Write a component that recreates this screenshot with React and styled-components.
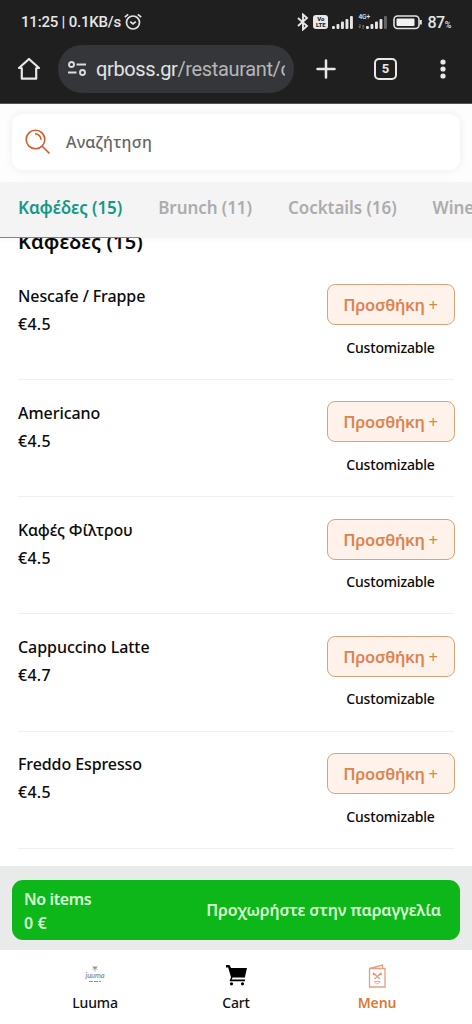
import React from "react";
import styled, { createGlobalStyle } from "styled-components";

const products = [
  { name: "Nescafe / Frappe", price: "€4.5", spacing: "-0.1px" },
  { name: "Americano", price: "€4.5", spacing: "-0.05px" },
  { name: "Καφές Φίλτρου", price: "€4.5", spacing: "-0.15px" },
  { name: "Cappuccino Latte", price: "€4.7", spacing: "-0.05px" },
  { name: "Freddo Espresso", price: "€4.5", spacing: "-0.1px" },
];

const categories = ["Καφέδες (15)", "Brunch (11)", "Cocktails (16)", "Wines (12)"];

function Signal({ weak }) {
  return (
    <svg width="22" height="14" viewBox="0 0 22 14" fill="#e6e6e6">
      <rect x="0" y="11" width="2.9" height="3" rx="1" />
      <rect x="4.5" y="9" width="2.9" height="5" rx="1" />
      <rect x="9" y="6.5" width="2.9" height="7.5" rx="1" />
      <rect x="13.5" y="4" width="2.9" height="10" rx="1" />
      <rect x="18" y="1" width="2.9" height="13" rx="1" fill={weak ? "#666" : "#e6e6e6"} />
    </svg>
  );
}

function StatusBar() {
  return (
    <Status>
      <Clock>11:25 | 0.1KB/s</Clock>
      <svg width="18" height="18" viewBox="0 0 18 18" fill="none" stroke="#e4e4e4" strokeWidth="1.7">
        <circle cx="9" cy="9.5" r="6.5" />
        <path d="M.8 4.200 4.200 1.400M17.200 4.200 13.800 1.400M6.200 8.600 9 11l2.800-2.400" />
      </svg>
      <StatusRight>
        <svg width="12" height="18" viewBox="0 0 12 18" fill="none" stroke="#e6e6e6" strokeWidth="1.9">
          <path d="m1 5 9 8-4 3.500v-15L10 5l-9 8" />
        </svg>
        <Volte><span>Vo</span><span>LTE</span></Volte>
        <Signal />
        <Mobile>
          <small>4G+</small>
          <svg width="7" height="5" viewBox="0 0 7 5" fill="none" stroke="#777" strokeWidth="1">
            <path d="M2 0v4L.5 2.500M5 5V1l1.500 1.500" />
          </svg>
          <Signal weak />
        </Mobile>
        <svg width="31" height="15" viewBox="0 0 31 15">
          <rect x="2" y="1" width="25" height="12.5" rx="3.5" fill="none" stroke="#e4e4e4" strokeWidth="1.6" />
          <rect x="4.5" y="3.5" width="18" height="7.5" rx="1" fill="#f1f1f1" />
          <path d="M28.800 5v4.500" stroke="#e4e4e4" strokeWidth="2" />
        </svg>
        <Percent>87<small>%</small></Percent>
      </StatusRight>
    </Status>
  );
}

function BrowserBar() {
  return (
    <Browser>
      <svg width="24" height="24" viewBox="0 0 24 24" fill="none" stroke="#e7e7e7" strokeWidth="2.2" strokeLinejoin="round">
        <path d="M4.800 11H2L12 2l10 9h-2.800M4.800 10.500V21.700h14.400V10.500" />
      </svg>
      <Address>
        <svg width="20" height="16" viewBox="0 0 20 16" fill="none" stroke="#dadce0" strokeWidth="1.9">
          <circle cx="4.5" cy="3.5" r="2.5" />
          <path d="M9.500 3.500H19M1 11.500h8.500" />
          <circle cx="15.5" cy="11.500" r="2.5" />
        </svg>
        <Url>qrboss.gr<span>/restaurant/cafe</span></Url>
      </Address>
      <svg width="20" height="20" viewBox="0 0 20 20" stroke="#e8e8e8" strokeWidth="2.5" strokeLinecap="round">
        <path d="M10 1.500v17M1.500 10h17" />
      </svg>
      <TabCount>5</TabCount>
      <svg width="6" height="20" viewBox="0 0 6 20" fill="#e8e8e8">
        <circle cx="3" cy="3" r="2.6" />
        <circle cx="3" cy="10" r="2.6" />
        <circle cx="3" cy="17" r="2.6" />
      </svg>
    </Browser>
  );
}

function App() {
  return (
    <>
      <GlobalStyle />
      <Screen>
        <StatusBar />
        <BrowserBar />
        <SearchArea>
          <SearchBox>
            <svg width="26" height="26" viewBox="0 0 26 26" fill="none" stroke="#d65a2c" strokeWidth="1.6">
              <circle cx="10.500" cy="10.500" r="9.300" />
              <path d="m17 17 7.500 7.500M10 4.800a6 6 0 0 1 6 6" />
            </svg>
            <span>Αναζήτηση</span>
          </SearchBox>
        </SearchArea>
        <Categories>
          {categories.map((name, i) => (
            <Category key={name} $active={i === 0}>{name}</Category>
          ))}
        </Categories>
        <List>
          <Heading>Καφέδες (15)</Heading>
          {products.map((item) => (
            <Product key={item.name}>
              <Info>
                <Name $spacing={item.spacing}>{item.name}</Name>
                <Price>{item.price}</Price>
              </Info>
              <Action>
                <AddButton>Προσθήκη <span>+</span></AddButton>
                <Note>Customizable</Note>
              </Action>
            </Product>
          ))}
        </List>
        <OrderArea>
          <OrderButton>
            <Total>
              <span>No items</span>
              <span>0 €</span>
            </Total>
            <Proceed>Προχωρήστε στην παραγγελία</Proceed>
          </OrderButton>
        </OrderArea>
        <BottomNav>
          <NavItem>
            <svg width="24" height="24" viewBox="0 0 24 24" fill="none" stroke="#8f8f8f" strokeWidth="0.8">
              <path d="M10 3.500h4M12 2v5.500M9.500 2.500l5 3M14.500 2.500l-5 3" />
              <text x="2.5" y="13.500" fill="#808080" stroke="none" fontFamily="Lato" fontSize="7.5" fontStyle="italic" textLength="19">juuma</text>
              <path d="M6 17.500h12" stroke="#777" strokeDasharray="4 1" />
            </svg>
            <span>Luuma</span>
          </NavItem>
          <NavItem>
            <svg width="24" height="24" viewBox="0 0 24 24" fill="#000">
              <path d="M2 1h3.500l1.600 3H23l-2.200 9.500H8.500l-.8 2H21v1.800H5.500l1.500-4L4.200 3.500H2z" />
              <circle cx="7.500" cy="19.800" r="1.6" />
              <circle cx="18.500" cy="19.800" r="1.6" />
            </svg>
            <span>Cart</span>
          </NavItem>
          <NavItem $active>
            <svg width="24" height="24" viewBox="0 0 24 24" fill="none" stroke="#e3a080" strokeWidth="1.3">
              <path d="M4.500 4.500h15.500v18.500H4.500zM4.500 4.500 17.500 1v3.500" />
              <path d="m9.500 10 5.500 5M15 10l-5.500 5" />
              <path d="M8.500 8.500v2h2M16 8.500v2h-2" stroke="#d98a68" />
              <path d="M9.500 17.500h5.500c0 3-5.500 3-5.500 0z" strokeWidth="0.9" />
            </svg>
            <span>Menu</span>
          </NavItem>
        </BottomNav>
      </Screen>
    </>
  );
}

const GlobalStyle = createGlobalStyle`
  * {
    box-sizing: border-box;
  }
  body {
    margin: 0;
    background: #fff;
    font-family: "Noto Sans", sans-serif;
    font-weight: 500;
    color: #0b0b0b;
  }
  svg {
    display: block;
    flex-shrink: 0;
  }
  button {
    font: inherit;
  }
`;

const Screen = styled.div`
  width: 472px;
  height: 1024px;
  display: flex;
  flex-direction: column;
  overflow: hidden;
`;

const Status = styled.div`
  height: 40px;
  flex-shrink: 0;
  display: flex;
  align-items: center;
  padding: 4px 21px 0 21px;
  background: #1f1f1f;
  color: #e6e6e6;
  font-family: Roboto, sans-serif;
`;

const Clock = styled.span`
  width: 103px;
  font-size: 15px;
  letter-spacing: -0.2px;
  white-space: nowrap;
`;

const StatusRight = styled.div`
  display: flex;
  align-items: center;
  margin-left: auto;
  gap: 4px;
`;

const Volte = styled.div`
  display: flex;
  flex-direction: column;
  align-items: center;
  justify-content: center;
  width: 15px;
  height: 14px;
  border-radius: 3px;
  background: #e8e8e8;
  color: #222;
  font-size: 6px;
  font-weight: 800;
  line-height: 6px;
`;

const Mobile = styled.div`
  position: relative;
  display: flex;
  align-items: flex-end;
  gap: 1px;
  small {
    position: absolute;
    left: 0;
    top: -1px;
    font-size: 6.5px;
    line-height: 7px;
  }
`;

const Percent = styled.span`
  font-size: 16px;
  letter-spacing: -0.4px;
  small {
    font-size: 9px;
  }
`;

const Browser = styled.div`
  height: 64px;
  flex-shrink: 0;
  display: flex;
  align-items: center;
  padding: 0 26px 6px 17px;
  background: #1f1f1f;
  border-bottom: 1px solid #555;
`;

const Address = styled.div`
  width: 236px;
  height: 48px;
  display: flex;
  align-items: center;
  gap: 9px;
  margin: 0 22px 0 17px;
  padding: 0 9px;
  border-radius: 24px;
  background: #35363a;
`;

const Url = styled.span`
  flex: 1;
  overflow: hidden;
  white-space: nowrap;
  font-family: Roboto, sans-serif;
  font-size: 20px;
  font-weight: 400;
  letter-spacing: -0.36px;
  color: #e3e3e3;
  span {
    color: #b5b6b9;
  }
`;

const TabCount = styled.span`
  width: 23px;
  height: 22px;
  display: grid;
  place-items: center;
  margin: 0 auto 0 38px;
  border: 2px solid #e8e8e8;
  border-radius: 5px;
  color: #e8e8e8;
  font: 700 13px Roboto, sans-serif;
`;

const SearchArea = styled.div`
  height: 78px;
  flex-shrink: 0;
  padding: 10px 12px;
  background: #fdfdfd;
`;

const SearchBox = styled.div`
  height: 56px;
  display: flex;
  align-items: center;
  gap: 15px;
  padding: 0 13px;
  border-radius: 10px;
  background: #fff;
  box-shadow: 0 0 8px rgba(0, 0, 0, 0.07);
  color: #666;
  font-size: 16px;
  letter-spacing: 0.25px;
`;

const Categories = styled.div`
  height: 56px;
  flex-shrink: 0;
  display: flex;
  background: #f4f4f4;
  box-shadow: 0 2px 5px rgba(0, 0, 0, 0.03);
  z-index: 1;
`;

const Category = styled.div`
  flex-shrink: 0;
  padding: 13px 18px 0;
  border-bottom: 1px solid ${(p) => (p.$active ? "#28ad98" : "transparent")};
  color: ${(p) => (p.$active ? "#169987" : "#acacac")};
  font-size: 17px;
  font-weight: 600;
  line-height: 25px;
  letter-spacing: -0.07px;
  white-space: nowrap;
`;

const List = styled.div`
  height: 628px;
  flex-shrink: 0;
  overflow: hidden;
  padding: 0 18px;
`;

const Heading = styled.h2`
  height: 24px;
  margin: 0;
  margin-top: -10px;
  font-size: 20px;
  font-weight: 600;
  line-height: 28px;
  letter-spacing: 0.1px;
`;

const Product = styled.div`
  height: 117.2px;
  display: flex;
  justify-content: space-between;
  border-bottom: 1px solid #f0f0f0;
  &:nth-child(2) {
    height: 128px;
    padding-top: 11px;
  }
`;

const Info = styled.div`
  padding-top: 18.7px;
`;

const Name = styled.div`
  font-size: 16px;
  line-height: 28px;
  letter-spacing: ${(p) => p.$spacing};
`;

const Price = styled.div`
  font-size: 16px;
  line-height: 28px;
  letter-spacing: 0.25px;
`;

const Action = styled.div`
  width: 128px;
  padding-top: 21.4px;
  display: flex;
  flex-direction: column;
  align-items: center;
  gap: 11.6px;
  margin-right: -0.5px;
`;

const AddButton = styled.button`
  width: 128px;
  height: 41px;
  padding: 0;
  border: 1px solid #d8a47c;
  border-radius: 8px;
  background: #fff2ea;
  color: #db8450;
  font-size: 16.5px;
  font-weight: 600;
  letter-spacing: -0.3px;
  span {
    font-weight: 400;
    color: #c98b4e;
  }
`;

const Note = styled.span`
  font-size: 14px;
  line-height: 22px;
  letter-spacing: -0.18px;
`;

const OrderArea = styled.div`
  height: 84px;
  flex-shrink: 0;
  padding: 14px 12px 0;
  background: #e9ebea;
`;

const OrderButton = styled.div`
  height: 60px;
  display: flex;
  align-items: center;
  justify-content: space-between;
  padding: 0 19px 0 12px;
  border-radius: 11px;
  background: #0eb719;
  color: #d8ffd5;
`;

const Total = styled.div`
  display: flex;
  flex-direction: column;
  padding-top: 1px;
  font-size: 16px;
  font-weight: 600;
  line-height: 24px;
  letter-spacing: -0.4px;
  span:last-child {
    letter-spacing: 0.1px;
  }
`;

const Proceed = styled.span`
  font-size: 16px;
  font-weight: 600;
  letter-spacing: -0.1px;
`;

const BottomNav = styled.nav`
  flex: 1;
  display: grid;
  grid-template-columns: 142px 1fr 142px;
  padding: 0 24px;
`;

const NavItem = styled.div`
  display: flex;
  flex-direction: column;
  align-items: center;
  gap: 5px;
  padding-top: 14px;
  font-size: 14px;
  line-height: 20px;
  letter-spacing: -0.15px;
  font-weight: ${(p) => (p.$active ? 600 : 500)};
  color: ${(p) => (p.$active ? "#d97a38" : "#111")};
`;

export default App;
